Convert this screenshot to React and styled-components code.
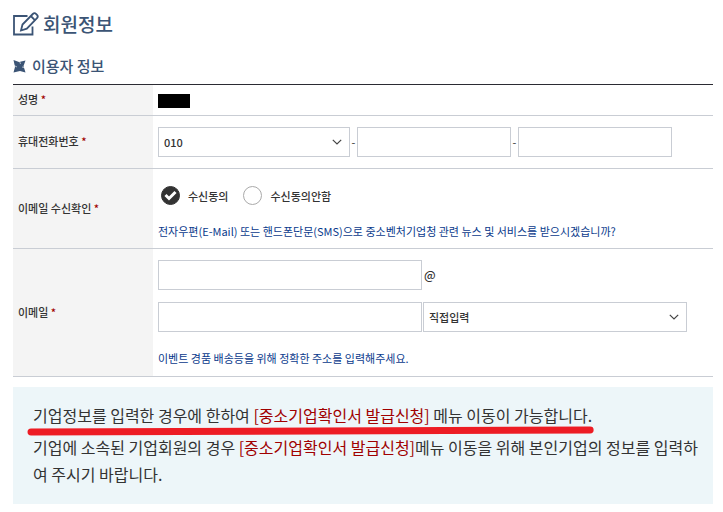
import React, { useState } from 'react'
import styled, { createGlobalStyle } from 'styled-components'

const GlobalStyle = createGlobalStyle`
  * {
    box-sizing: border-box;
  }

  body {
    margin: 0;
    background: #fff;
    color: #333;
    font-family: 'Noto Sans CJK KR', sans-serif;
    font-size: 11px;
    line-height: 18px;
  }

  input, select {
    font: inherit;
    color: inherit;
  }
`

const Page = styled.main`
  padding: 8px 10px 8px 13px;
`

const Title = styled.h1`
  display: flex;
  align-items: center;
  gap: 4px;
  margin: 0 0 14px;
  color: #3b5475;
  font-size: 19px;
  font-weight: 500;
  line-height: 32px;
`

const SubTitle = styled.h2`
  display: flex;
  align-items: center;
  gap: 6px;
  margin: 0 0 6px;
  color: #3b5475;
  font-size: 15px;
  font-weight: 500;
  line-height: 24px;
`

const InfoTable = styled.table`
  width: 100%;
  border-collapse: collapse;
  border-top: 1px solid #2b2b33;
`

const HeadCell = styled.th`
  width: 140px;
  padding: 4px 5px 6px;
  border-bottom: 1px solid #c9cdd4;
  background: #f4f4f4;
  font-weight: 500;
  text-align: left;
`

const Cell = styled.td`
  padding: ${({ $pad }) => $pad || '11px 5px'};
  border-bottom: 1px solid #c9cdd4;
`

const Required = styled.span`
  color: #a00000;
`

const Masked = styled.span`
  display: block;
  width: 32px;
  height: 14px;
  background: #000;
`

const Line = styled.div`
  display: flex;
  align-items: center;
  gap: 1px;

  & + & {
    margin-top: 12px;
  }
`

const RadioLine = styled.div`
  display: flex;
  flex-wrap: wrap;
  gap: 15px;
  padding-left: 3px;
`

const Field = styled.input`
  flex: 0 1 ${({ $width }) => $width};
  min-width: 0;
  height: 30px;
  padding: 0 5px;
  border: 1px solid #c9cdd4;
  border-radius: 0;
  background: #fff;
`

const SelectBox = styled.div`
  display: grid;
  flex: 0 1 ${({ $width }) => $width};
  align-items: center;
  min-width: 0;

  & > * {
    grid-area: 1 / 1;
  }

  & > svg {
    justify-self: end;
    margin-right: 8px;
    pointer-events: none;
  }
`

const Select = styled.select`
  width: 100%;
  height: 30px;
  padding: 0 20px 0 5px;
  border: 1px solid #c9cdd4;
  border-radius: 0;
  background: #fff;
  font-weight: 500;
  appearance: none;
`

const Dash = styled.span`
  width: 5px;
  text-align: center;
`

const At = styled.span`
  padding-left: 1px;
  font-size: 12px;
  font-weight: 500;
`

const RadioLabel = styled.label`
  display: flex;
  align-items: center;
  gap: 8px;
  font-weight: 500;
`

const Radio = styled.input`
  width: 19px;
  height: 19px;
  margin: 0;
  border: 1px solid #aaa;
  border-radius: 50%;
  background: #fff;
  appearance: none;

  &:checked {
    border-color: #333;
    background: #333;
  }
`

const RadioMark = styled.span`
  display: grid;
  place-items: center;

  & > * {
    grid-area: 1 / 1;
  }

  & > svg {
    pointer-events: none;
  }
`

const Help = styled.p`
  margin: 17px 0 0;
  color: #0a3a8c;
`

const Notice = styled.section`
  margin-top: 10px;
  padding: 15px 10px 16px 20px;
  background: #edf6f9;
  font-size: 16px;
  line-height: 27px;
  word-break: break-all;
`

const NoticeText = styled.p`
  margin: 0;

  & + & {
    margin-top: 5px;
  }
`

const Marked = styled.span`
  position: relative;
  display: inline-block;
`

const MarkerLine = styled.svg`
  position: absolute;
  left: -6px;
  bottom: -7px;
  width: calc(100% + 8px);
  height: 10px;
`

const Menu = styled.span`
  color: #a00000;
`

const EditIcon = () => (
  <svg width="26" height="26" viewBox="0 0 26 26" fill="none" stroke="#3b5475" strokeWidth="1.8" aria-hidden="true">
    <path d="M14.500 5H1v18.500h18.500v-8" />
    <path d="M8 19.500l1.500-6L19.800 3q1.700-1.700 3.300 0l.9.9q1.600 1.600 0 3.200L13.800 17.700z" />
    <path d="M17.800 5l4.300 4.300" />
  </svg>
)

const BulletIcon = () => (
  <svg width="13" height="13" viewBox="0 0 13 13" aria-hidden="true">
    <path d="M.5 0L6 2 12.500.5 10.500 6 12.500 12.500 7 11 .5 12.500 2 7z" fill="#3b5475" />
    <path d="M0 5l4 2M6.500 1l1 3M9 7l4 1" stroke="#fff" strokeWidth=".6" />
  </svg>
)

const Chevron = () => (
  <svg width="10" height="6" viewBox="0 0 10 6" fill="none" stroke="#444" strokeWidth="1.200" aria-hidden="true">
    <path d="M.8.8L5 5 9.200.8" />
  </svg>
)

const Check = () => (
  <svg width="13" height="11" viewBox="0 0 13 11" fill="none" stroke="#fff" strokeWidth="3" aria-hidden="true">
    <path d="M1.500 5l3.500 3.500L11.500 2" />
  </svg>
)

const Label = ({ htmlFor, children }) => (
  <HeadCell scope="row">
    {htmlFor ? <label htmlFor={htmlFor}>{children}</label> : children} <Required>*</Required>
  </HeadCell>
)

export default function App() {
  const [agree, setAgree] = useState('yes')

  return (
    <Page>
      <GlobalStyle />
      <Title><EditIcon />회원정보</Title>
      <SubTitle><BulletIcon />이용자 정보</SubTitle>
      <InfoTable>
        <tbody>
          <tr>
            <Label>성명</Label>
            <Cell $pad="9px 5px 7px"><Masked /></Cell>
          </tr>
          <tr>
            <Label htmlFor="phone">휴대전화번호</Label>
            <Cell>
              <Line>
                <SelectBox $width="192px">
                  <Select id="phone" defaultValue="010">
                    <option>010</option>
                    <option>011</option>
                  </Select>
                  <Chevron />
                </SelectBox>
                <Dash>-</Dash>
                <Field $width="154px" type="tel" aria-label="휴대전화번호 가운데 자리" />
                <Dash>-</Dash>
                <Field $width="154px" type="tel" aria-label="휴대전화번호 끝자리" />
              </Line>
            </Cell>
          </tr>
          <tr>
            <Label>이메일 수신확인</Label>
            <Cell $pad="17px 5px 8px">
              <RadioLine>
                {[['yes', '수신동의'], ['no', '수신동의안함']].map(([value, text]) => (
                  <RadioLabel key={value}>
                    <RadioMark>
                      <Radio
                        type="radio"
                        name="agree"
                        checked={agree === value}
                        onChange={() => setAgree(value)}
                      />
                      {agree === value && <Check />}
                    </RadioMark>
                    {text}
                  </RadioLabel>
                ))}
              </RadioLine>
              <Help>전자우편(E-Mail) 또는 핸드폰단문(SMS)으로 중소벤처기업청 관련 뉴스 및 서비스를 받으시겠습니까?</Help>
            </Cell>
          </tr>
          <tr>
            <Label htmlFor="email">이메일</Label>
            <Cell $pad="11px 5px 9px">
              <Line>
                <Field $width="264px" id="email" type="text" />
                <At>@</At>
              </Line>
              <Line>
                <Field $width="264px" type="text" aria-label="이메일 도메인" />
                <SelectBox $width="264px">
                  <Select aria-label="이메일 도메인 선택" defaultValue="직접입력">
                    <option>직접입력</option>
                  </Select>
                  <Chevron />
                </SelectBox>
              </Line>
              <Help>이벤트 경품 배송등을 위해 정확한 주소를 입력해주세요.</Help>
            </Cell>
          </tr>
        </tbody>
      </InfoTable>
      <Notice>
        <NoticeText>
          <Marked>
            기업정보를 입력한 경우에 한하여 <Menu>[중소기업확인서 발급신청]</Menu> 메뉴 이동이 가능합니다.
            <MarkerLine viewBox="0 0 556 10" preserveAspectRatio="none" aria-hidden="true">
              <path d="M4 6L552 4" stroke="#ed1c24" strokeWidth="7" strokeLinecap="round" />
            </MarkerLine>
          </Marked>
        </NoticeText>
        <NoticeText>
          기업에 소속된 기업회원의 경우 <Menu>[중소기업확인서 발급신청]</Menu>메뉴 이동을 위해 본인기업의 정보를 입력하여 주시기 바랍니다.
        </NoticeText>
      </Notice>
    </Page>
  )
}
